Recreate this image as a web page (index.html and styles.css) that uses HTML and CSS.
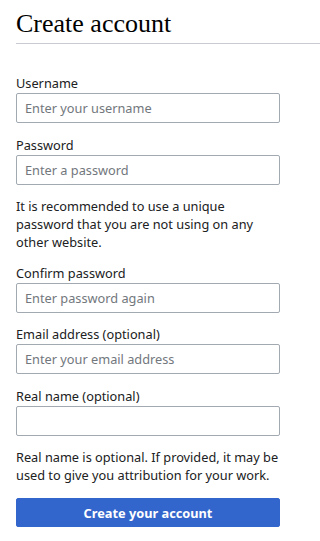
FILE: index.html
```html
<!DOCTYPE html>
<html lang="en">
<head>
<meta charset="utf-8">
<title>Create account</title>
<link rel="stylesheet" href="styles.css">
</head>
<body>
<div class="page">
  <h1 class="title">Create account</h1>
  <form class="form">
    <div class="field">
      <label class="label" for="u">Username</label>
      <input class="input" id="u" type="text" placeholder="Enter your username">
    </div>
    <div class="field">
      <label class="label" for="p">Password</label>
      <input class="input" id="p" type="password" placeholder="Enter a password">
    </div>
    <p class="help">It is recommended to use a unique password that you are not using on any other website.</p>
    <div class="field">
      <label class="label" for="c">Confirm password</label>
      <input class="input" id="c" type="password" placeholder="Enter password again">
    </div>
    <div class="field">
      <label class="label" for="e">Email address (optional)</label>
      <input class="input" id="e" type="email" placeholder="Enter your email address">
    </div>
    <div class="field">
      <label class="label" for="r">Real name (optional)</label>
      <input class="input" id="r" type="text">
    </div>
    <p class="help">Real name is optional. If provided, it may be used to give you attribution for your work.</p>
    <button class="submit" type="button">Create your account</button>
  </form>
</div>
</body>
</html>
```
FILE: styles.css
```css
html, body {
  margin: 0;
  padding: 0;
  background: #ffffff;
}
.page {
  padding-left: 16px;
  color: #202122;
  font-family: "Noto Sans", "DejaVu Sans", sans-serif;
  font-size: 12.75px;
}
.title {
  margin: 8px 0 0 0;
  padding: 0 0 3px 0;
  font-family: "Liberation Serif", "Times New Roman", serif;
  font-weight: normal;
  font-size: 26px;
  line-height: 32px;
  color: #000000;
  border-bottom: 1px solid #c8ccd1;
}
.form {
  width: 264px;
  padding-top: 30px;
  display: flex;
  flex-direction: column;
  gap: 12.5px;
}
.field {
  display: flex;
  flex-direction: column;
}
.label {
  line-height: 18px;
  padding-bottom: 1px;
}
.input {
  box-sizing: border-box;
  width: 100%;
  height: 30px;
  margin: 0;
  padding: 0 8px;
  border: 1px solid #a2a9b1;
  border-radius: 2px;
  font-family: "Noto Sans", "DejaVu Sans", sans-serif;
  font-size: 12.75px;
  color: #202122;
  background: #ffffff;
}
.input::placeholder {
  color: #72777d;
  opacity: 1;
}
.help {
  margin: 0;
  line-height: 18px;
}
.submit {
  box-sizing: border-box;
  width: 100%;
  height: 29px;
  margin: 1.5px 0 0 0;
  padding: 0 12px;
  border: 1px solid #3366cc;
  border-radius: 2px;
  background: #3366cc;
  color: #ffffff;
  font-family: "Noto Sans", "DejaVu Sans", sans-serif;
  font-size: 12.75px;
  font-weight: bold;
}
```
